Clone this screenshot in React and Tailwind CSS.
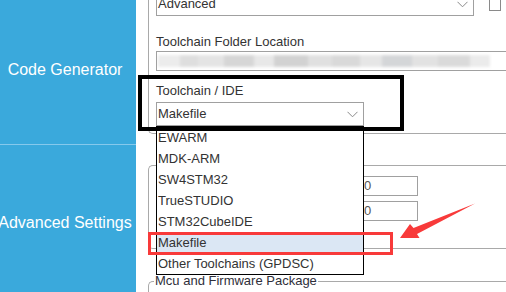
import React from "react";

const font = { fontFamily: '"Liberation Sans", Arial, sans-serif' };

const toolchains = [
    "EWARM",
    "MDK-ARM",
    "SW4STM32",
    "TrueSTUDIO",
    "STM32CubeIDE",
    "Makefile",
    "Other Toolchains (GPDSC)",
];

// blurred path blocks inside the folder input
const blurBlocks = [
    ["w-[22px]", "bg-[#ececec]"],
    ["w-[18px]", "bg-[#dedede]"],
    ["w-[26px]", "bg-[#e4e4e4]"],
    ["w-[30px]", "bg-[#d6d6d6]"],
    ["w-[20px]", "bg-[#e8e8e8]"],
    ["w-[34px]", "bg-[#d2d2d2]"],
    ["w-[24px]", "bg-[#e0e0e0]"],
    ["w-[28px]", "bg-[#d9d9d9]"],
    ["w-[22px]", "bg-[#e6e6e6]"],
    ["w-[30px]", "bg-[#d4d6d8]"],
    ["w-[26px]", "bg-[#e2e2e2]"],
    ["w-[32px]", "bg-[#dadada]"],
    ["w-[20px]", "bg-[#ebebeb]"],
];

function Chevron() {
    return (
        <svg width="11" height="7" viewBox="0 0 11 7" className="shrink-0">
            <path d="M0.5 0.8 L5.5 5.8 L10.5 0.8" fill="none" stroke="#8a8a8a" strokeWidth="1" />
        </svg>
    );
}

export default function App() {
    return (
        <div className="relative w-[506px] h-[292px] overflow-hidden bg-white flex text-[13px] leading-[16px] text-[#333]" style={font}>
            {/* left nav */}
            <div className="w-[136px] shrink-0 bg-[#3aa9dc] flex flex-col text-white text-[16px]">
                <div className="h-[144px] flex items-center justify-center pb-[4px] pr-[6px] whitespace-nowrap">
                    Code Generator
                </div>
                <div className="h-px bg-[#86c9ec]" />
                <div className="flex-1 flex items-center justify-center pt-[8px] pr-[6px] whitespace-nowrap">
                    Advanced Settings
                </div>
            </div>

            {/* settings pane */}
            <div className="flex-1 pl-[12px] flex flex-col">
                {/* toolchain group */}
                <div className="-mt-[10px] h-[144px] shrink-0 border-l border-b border-[#a9a9a9] rounded-bl-[5px] pl-[7px] pt-[2px] flex flex-col">
                    <div className="flex items-start">
                        <div className="w-[318px] h-[24px] border border-[#a0a0a0] flex items-center justify-between pl-[1px] pr-[5px]">
                            <span>Advanced</span>
                            <Chevron />
                        </div>
                        <div className="ml-[15px] mt-[7px] w-[12px] h-[12px] border border-[#8a8a8a] bg-white" />
                    </div>
                    <div className="mt-[18px] whitespace-nowrap">Toolchain Folder Location</div>
                    <div className="mt-[1px] w-[352px] h-[20px] border border-[#a0a0a0] flex items-center pl-[1px] overflow-hidden">
                        <div className="flex h-[12px] blur-[1.5px]">
                            {blurBlocks.map(([w, bg], i) => (
                                <div key={i} className={`${w} ${bg} h-full`} />
                            ))}
                        </div>
                    </div>
                    <div className="mt-[12px] whitespace-nowrap">Toolchain / IDE</div>
                    <div className="mt-[3px] w-[208px] h-[24px] border border-[#a0a0a0] flex items-center justify-between pl-[1px] pr-[5px]">
                        <span>Makefile</span>
                        <Chevron />
                    </div>
                </div>

                {/* project group */}
                <div className="mt-[31px] h-[84px] shrink-0 border-l border-t border-b border-[#a9a9a9] rounded-tl-[5px] rounded-bl-[5px] pl-[211px] pt-[10px] flex flex-col gap-[5px]">
                    <div className="w-[58px] h-[20px] border border-[#a0a0a0] pl-[3px] flex items-center text-[#555]">0</div>
                    <div className="w-[58px] h-[20px] border border-[#a0a0a0] pl-[3px] flex items-center text-[#555]">0</div>
                </div>

                {/* mcu group */}
                <div className="mt-[32px] h-[40px] shrink-0 border-l border-t border-[#a9a9a9] rounded-tl-[5px]">
                    <span className="block w-fit -mt-[9px] ml-[5px] px-[1px] bg-white text-[#2f2f3a] whitespace-nowrap">
                        Mcu and Firmware Package
                    </span>
                </div>
            </div>

            {/* open dropdown list */}
            <div className="absolute left-[156px] top-[126px] w-[208px] border border-black bg-white flex flex-col">
                {toolchains.map((name) => (
                    <div
                        key={name}
                        className={`h-[21px] flex items-center pl-[1px] whitespace-nowrap ${name === "Makefile" ? "bg-[#dbe7f4]" : ""}`}
                    >
                        {name}
                    </div>
                ))}
            </div>

            {/* annotation: black frame */}
            <div className="absolute left-[138px] top-[75px] w-[266px] h-[56px] border-4 border-black" />

            {/* annotation: red frame */}
            <div className="absolute left-[148px] top-[232px] w-[245px] h-[23px] border-[3px] border-[#f83a3a]" />

            {/* annotation: arrow */}
            <svg className="absolute left-[396px] top-[198px]" width="84" height="44" viewBox="0 0 84 44">
                <polygon
                    points="4,40 14,26 17.5,30 79,5.5 21,36 23.5,40"
                    fill="#f83a3a"
                />
            </svg>
        </div>
    );
}
